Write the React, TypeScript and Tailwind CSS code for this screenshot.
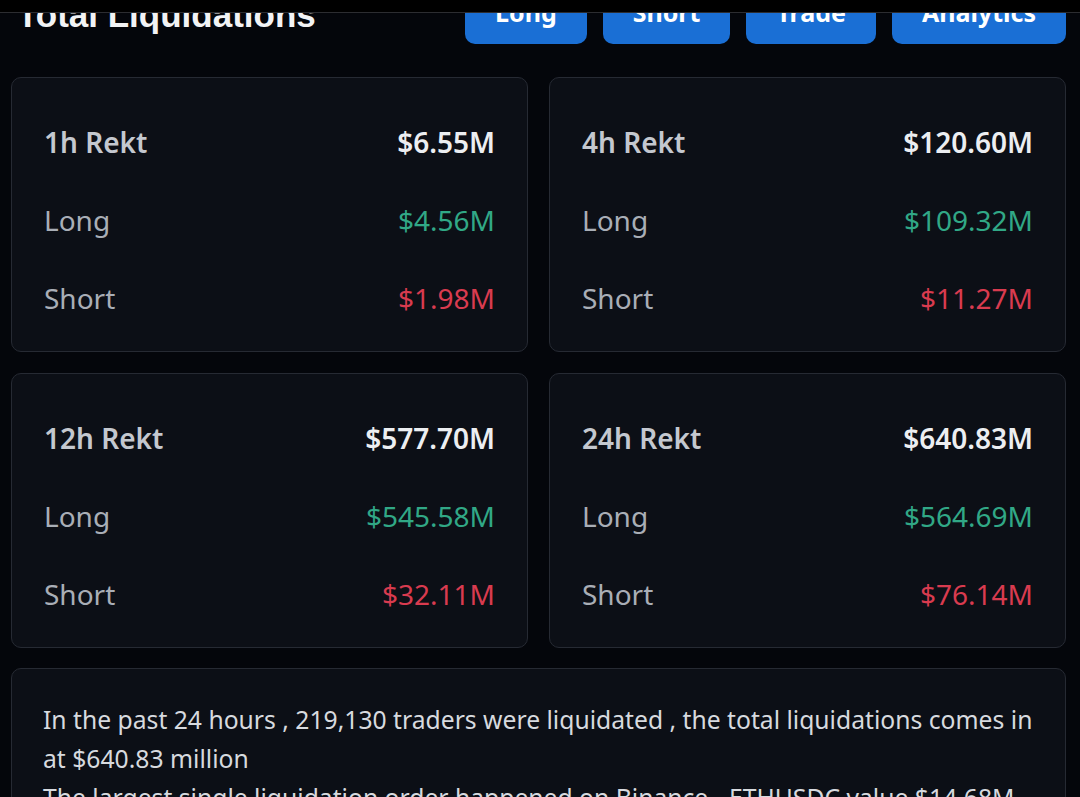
const buttons = ["Long", "Short", "Trade", "Analytics"]

const stats = [
    { label: "1h Rekt", total: "$6.55M", long: "$4.56M", short: "$1.98M" },
    { label: "4h Rekt", total: "$120.60M", long: "$109.32M", short: "$11.27M" },
    { label: "12h Rekt", total: "$577.70M", long: "$545.58M", short: "$32.11M" },
    { label: "24h Rekt", total: "$640.83M", long: "$564.69M", short: "$76.14M" },
]

const StatCard = ({ label, total, long, short }: { label: string; total: string; long: string; short: string }) => (
    <div className="rounded-[10px] border border-[#262a33] bg-[#0c0f16] pl-[32px] pr-[32px] pt-[45px] pb-[33px] flex flex-col gap-[39px] text-[28px] leading-[39px]">
        <div className="flex justify-between items-center">
            <span className="font-semibold text-[#c4c8cf]">{label}</span>
            <span className="font-semibold text-[#eceef1]">{total}</span>
        </div>
        <div className="flex justify-between items-center">
            <span className="text-[#a9aeb6]">Long</span>
            <span className="text-[#31a886]">{long}</span>
        </div>
        <div className="flex justify-between items-center">
            <span className="text-[#a9aeb6]">Short</span>
            <span className="text-[#d93b4f]">{short}</span>
        </div>
    </div>
)

export default function App() {
    return (
        <div className="w-[1080px] h-[797px] overflow-hidden bg-[#04060b] flex flex-col" style={{ fontFamily: '"Noto Sans", Roboto, sans-serif' }}>
            <div className="h-[13px] shrink-0 bg-black border-b border-[#2c2d31] relative z-10" />
            <div className="flex-1 overflow-hidden">
                <div className="mt-[-27px] flex justify-between items-start pl-[17px] pr-[14px]">
                    <h1 className="mt-[9px] text-[35px] leading-[40px] font-bold text-[#f2f3f5]" style={{ fontFamily: '"Liberation Sans", Arial, sans-serif' }}>
                        Total Liquidations
                    </h1>
                    <div className="flex gap-[16px]">
                        {buttons.map((b) => (
                            <button key={b} type="button" className="h-[58px] px-[30px] pb-[4px] rounded-[10px] bg-[#1a6fd5] text-white text-[25px] font-bold flex items-center">
                                {b}
                            </button>
                        ))}
                    </div>
                </div>
                <div className="mt-[33px] pl-[11px] pr-[14px] grid grid-cols-2 gap-[21px]">
                    {stats.map((s) => (
                        <StatCard key={s.label} {...s} />
                    ))}
                </div>
                <div className="mt-[20px] ml-[11px] mr-[14px] rounded-[10px] border border-[#262a33] bg-[#0c0f16] px-[31px] pt-[31px] pb-[30px] text-[24.7px] leading-[39px] text-[#d7dadf]">
                    <p className="whitespace-nowrap">
                        In the past 24 hours , 219,130 traders were liquidated , the total liquidations comes in
                        <br />
                        at $640.83 million
                    </p>
                    <p className="whitespace-nowrap">The largest single liquidation order happened on Binance - ETHUSDC value $14.68M</p>
                </div>
            </div>
        </div>
    )
}
